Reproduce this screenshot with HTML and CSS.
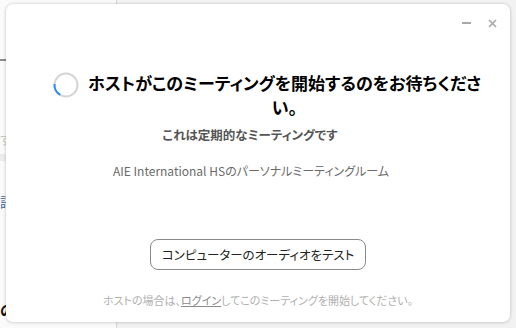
FILE: index.html
```html
<!DOCTYPE html>
<html lang="ja">
<head>
    <meta charset="UTF-8">
    <title>ミーティング待機</title>
    <link rel="stylesheet" href="styles.css">
</head>
<body>
    <div class="backdrop">
        <div class="side">
            <div class="side-top"></div>
            <div class="side-row faint">す</div>
            <div class="side-band"></div>
            <div class="side-row lang">語</div>
            <div class="side-row strong">の</div>
        </div>
        <div class="main"></div>
    </div>

    <div class="dialog">
        <div class="window-controls">
            <span class="ctrl minimize"></span>
            <span class="ctrl close">
                <svg width="9" height="9" viewBox="0 0 9 9">
                    <line x1="1" y1="1" x2="8" y2="8" stroke="#a8a8a8" stroke-width="1.6"></line>
                    <line x1="8" y1="1" x2="1" y2="8" stroke="#a8a8a8" stroke-width="1.6"></line>
                </svg>
            </span>
        </div>
        <div class="waiting">
            <svg class="spinner" width="26" height="26" viewBox="0 0 26 26">
                <circle cx="13" cy="13" r="11.5" fill="none" stroke="#d4d4d4" stroke-width="2"></circle>
                <path d="M 7.25 22.96 A 11.5 11.5 0 0 1 1.55 12" fill="none" stroke="#2d8cff" stroke-width="2"></path>
            </svg>
            <h1 class="waiting-title">ホストがこのミーティングを開始するのをお待ちください。</h1>
        </div>
        <p class="recurring">これは定期的なミーティングです</p>
        <p class="room">AIE International HSのパーソナルミーティングルーム</p>
        <button class="test-audio">コンピューターのオーディオをテスト</button>
        <p class="host-note">ホストの場合は、<a href="#">ログイン</a>してこのミーティングを開始してください。</p>
    </div>
</body>
</html>
```

FILE: styles.css
```css
* {
    margin: 0;
    padding: 0;
    box-sizing: border-box;
}
body {
    width: 516px;
    height: 328px;
    overflow: hidden;
    font-family: "Noto Sans CJK JP", "Noto Sans", sans-serif;
    font-feature-settings: "palt";
    background: #ececec;
    position: relative;
}
.backdrop {
    display: flex;
    height: 100%;
}
.side {
    width: 117px;
    background: #fafafa;
    border-right: 1px solid #d6d6d6;
    display: flex;
    flex-direction: column;
}
.side-top {
    height: 61px;
    border-bottom: 2px solid #8c8c8c;
}
.side-row {
    font-size: 13px;
    line-height: 20px;
}
.side-row.faint {
    color: #c8c8c8;
    margin-top: 68px;
}
.side-band {
    height: 7px;
    background: #ececec;
    margin-top: 5px;
}
.side-row.lang {
    color: #2d5aa0;
    margin-top: 31px;
}
.side-row.strong {
    color: #111;
    font-weight: 700;
    font-size: 15px;
    margin-top: 88px;
}
.main {
    flex: 1;
    background: #f2f2f2;
}
.dialog {
    position: absolute;
    left: 6px;
    top: 4px;
    width: 504px;
    height: 318px;
    background: #fff;
    border-radius: 7px;
    box-shadow: 0 0 3px rgba(0, 0, 0, 0.18), 0 1px 4px rgba(0, 0, 0, 0.08);
    display: flex;
    flex-direction: column;
    align-items: center;
}
.window-controls {
    align-self: flex-end;
    display: flex;
    align-items: center;
    gap: 17px;
    height: 16px;
    margin-top: 11px;
    margin-right: 13px;
}
.ctrl {
    display: flex;
    align-items: center;
    justify-content: center;
    width: 9px;
    height: 9px;
}
.minimize::before {
    content: "";
    width: 9px;
    height: 2px;
    background: #a8a8a8;
}
.waiting {
    display: flex;
    align-items: flex-start;
    gap: 6px;
    margin-top: 40px;
    margin-left: 21px;
}
.spinner {
    margin-top: 1px;
    flex-shrink: 0;
}
.waiting-title {
    width: 400px;
    font-size: 17px;
    font-weight: 700;
    line-height: 24px;
    color: #000;
    text-align: center;
}
.recurring {
    margin-top: 7px;
    margin-right: 16px;
    font-size: 12.5px;
    font-weight: 700;
    line-height: 18px;
    color: #555;
}
.room {
    margin-top: 18px;
    margin-right: 14px;
    font-size: 12px;
    line-height: 18px;
    color: #6a6a6a;
}
.test-audio {
    margin-top: 59px;
    width: 216px;
    height: 31px;
    border: 1px solid #8a8a8a;
    border-radius: 8px;
    background: #fff;
    font-family: inherit;
    font-feature-settings: "palt";
    font-size: 12.5px;
    color: #222;
}
.host-note {
    margin-top: 22px;
    font-size: 11px;
    line-height: 16px;
    color: #b0b0b0;
}
.host-note a {
    color: #8a8a8a;
    text-decoration: underline;
}
```
